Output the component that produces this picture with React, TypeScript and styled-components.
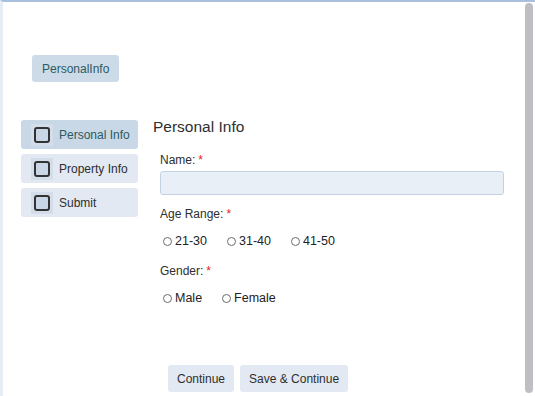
import React from "react";
import styled, { createGlobalStyle } from "styled-components";

const Global = createGlobalStyle`
  html, body { margin: 0; padding: 0; background: #ffffff; }
  body { font-family: "Liberation Sans", Arial, sans-serif; color: #333; }
  * { box-sizing: border-box; }
`;

const Frame = styled.div`
  display: flex;
  height: 396px;
  width: 535px;
  border-top: 2px solid #a9c0dd;
  border-left: 3px solid #e6edf5;
  background: #fff;
  overflow: hidden;
`;

const Content = styled.div`
  flex: 1;
  padding-left: 18px;
  display: flex;
  flex-direction: column;
`;

const TopBar = styled.div`
  padding: 53px 0 0 11px;
  display: flex;
`;

const TagButton = styled.button`
  font-family: inherit;
  font-size: 12px;
  height: 27px;
  padding: 0 10px;
  border: none;
  border-radius: 3px;
  background: #cddbe8;
  color: #2c5a5e;
  cursor: pointer;
`;

const Body = styled.div`
  display: flex;
  align-items: flex-start;
  gap: 15px;
  margin-top: 36px;
`;

const Sidebar = styled.nav`
  width: 117px;
  margin-top: 2px;
  display: flex;
  flex-direction: column;
  gap: 5px;
`;

const StepItem = styled.div<{ $active?: boolean }>`
  height: 29px;
  display: flex;
  align-items: center;
  gap: 6px;
  padding-left: 10px;
  border-radius: 3px;
  background: ${(p) => (p.$active ? "#c9d8e6" : "#e2e9f2")};
  color: ${(p) => (p.$active ? "#2c5a5e" : "#2e2e2e")};
  font-size: 12px;
`;

const BoxWrap = styled.span`
  width: 22px;
  height: 22px;
  display: flex;
  align-items: center;
  justify-content: center;
  background: #d3deea;
`;

const Box = styled.span`
  width: 16px;
  height: 16px;
  border: 2px solid #333;
  border-radius: 3px;
  background: #c8d6e5;
`;

const Main = styled.section`
  flex: 1;
  display: flex;
  flex-direction: column;
`;

const Heading = styled.h2`
  margin: 0;
  font-size: 15.5px;
  font-weight: normal;
  line-height: 18px;
  color: #2e2e2e;
`;

const Form = styled.div`
  padding-left: 7px;
  display: flex;
  flex-direction: column;
  margin-top: 17px;
`;

const Label = styled.div<{ $gap?: number }>`
  font-size: 12px;
  line-height: 14px;
  color: #2e2e2e;
  margin-top: ${(p) => p.$gap ?? 0}px;
`;

const Req = styled.span`
  color: #e02424;
  margin-left: 3px;
`;

const TextInput = styled.input`
  margin-top: 4px;
  width: 344px;
  height: 24px;
  border: 1px solid #c3d2e3;
  border-radius: 3px;
  background: #e9eff6;
  outline: none;
`;

const RadioRow = styled.div`
  display: flex;
  gap: 20px;
  margin-top: 13px;
  padding-left: 3px;
`;

const RadioOption = styled.label`
  display: flex;
  align-items: center;
  gap: 3px;
  font-size: 12.5px;
  line-height: 14px;
  color: #222;
`;

const RadioDot = styled.input`
  appearance: none;
  margin: 0;
  width: 9px;
  height: 9px;
  border: 1px solid #6b6b6b;
  border-radius: 50%;
  background: #fff;
`;

const Footer = styled.div`
  display: flex;
  gap: 6px;
  padding-left: 15px;
  margin-top: 60px;
`;

const ActionButton = styled.button`
  font-family: inherit;
  font-size: 12px;
  height: 27px;
  padding: 0 9px;
  border: none;
  border-radius: 3px;
  background: #e2e9f2;
  color: #2e2e2e;
  cursor: pointer;
`;

const ScrollTrack = styled.div`
  width: 13px;
  padding: 1px 2px 3px 3px;
  display: flex;
`;

const ScrollThumb = styled.div`
  flex: 1;
  border-radius: 4px;
  background: #bdbfc3;
`;

const steps = ["Personal Info", "Property Info", "Submit"];

export default function App() {
  return (
    <>
      <Global />
      <Frame>
        <Content>
          <TopBar>
            <TagButton>PersonalInfo</TagButton>
          </TopBar>
          <Body>
            <Sidebar>
              {steps.map((s, i) => (
                <StepItem key={s} $active={i === 0}>
                  <BoxWrap>
                    <Box />
                  </BoxWrap>
                  {s}
                </StepItem>
              ))}
            </Sidebar>
            <Main>
              <Heading>Personal Info</Heading>
              <Form>
                <Label>
                  Name:<Req>*</Req>
                </Label>
                <TextInput type="text" />
                <Label $gap={12}>
                  Age Range:<Req>*</Req>
                </Label>
                <RadioRow>
                  {["21-30", "31-40", "41-50"].map((a) => (
                    <RadioOption key={a}>
                      <RadioDot type="radio" name="age" />
                      {a}
                    </RadioOption>
                  ))}
                </RadioRow>
                <Label $gap={16}>
                  Gender:<Req>*</Req>
                </Label>
                <RadioRow>
                  {["Male", "Female"].map((g) => (
                    <RadioOption key={g}>
                      <RadioDot type="radio" name="gender" />
                      {g}
                    </RadioOption>
                  ))}
                </RadioRow>
              </Form>
              <Footer>
                <ActionButton>Continue</ActionButton>
                <ActionButton>Save &amp; Continue</ActionButton>
              </Footer>
            </Main>
          </Body>
        </Content>
        <ScrollTrack>
          <ScrollThumb />
        </ScrollTrack>
      </Frame>
    </>
  );
}
